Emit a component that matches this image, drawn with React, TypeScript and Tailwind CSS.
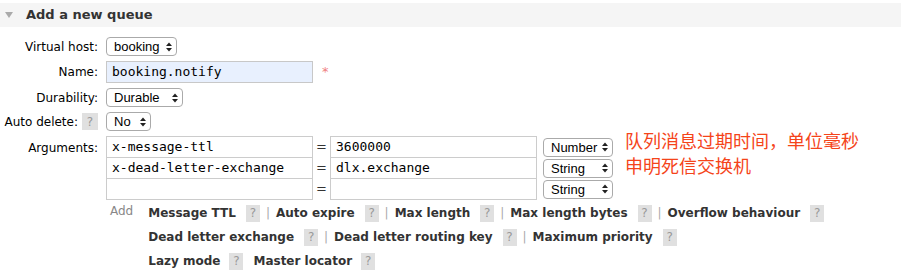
import React from "react";

// Add-queue form from the management console: a collapsible section header,
// a label/control grid, the argument rows and the list of optional keys.

function Help({ className = "" }: { className?: string }) {
  return (
    <span
      className={`inline-flex h-[17px] w-[14px] items-center justify-center bg-[#e0e0e0] text-[12px] text-[#999] ${className}`}
    >
      ?
    </span>
  );
}

function Chevrons() {
  return (
    <svg width="6" height="10" viewBox="0 0 6 10" className="shrink-0">
      <path d="M0 4 L3 0.5 L6 4 Z" fill="#222" />
      <path d="M0 6 L3 9.5 L6 6 Z" fill="#222" />
    </svg>
  );
}

function Select({ label, className }: { label: string; className: string }) {
  return (
    <span
      className={`flex h-[19px] items-center justify-between rounded-[4px] border border-[#aaa] bg-white pl-[7px] pr-[4px] font-['Liberation_Sans',sans-serif] text-[13px] leading-none text-black ${className}`}
    >
      <span>{label}</span>
      <Chevrons />
    </span>
  );
}

function Field({ value, className = "" }: { value: string; className?: string }) {
  return (
    <div
      className={`flex h-[22px] w-[207px] items-center border border-[#ccc] bg-white pl-[5px] font-['DejaVu_Sans_Mono',monospace] text-[13px] text-black ${className}`}
    >
      {value}
    </div>
  );
}

function Row({ label, children }: { label: React.ReactNode; children: React.ReactNode }) {
  return (
    <div className="flex items-start">
      <div className="flex h-[19px] w-[98px] shrink-0 items-center justify-end text-[12px] text-black">{label}</div>
      <div className="ml-[8px]">{children}</div>
    </div>
  );
}

const optional: string[][] = [
  ["Message TTL", "Auto expire", "Max length", "Max length bytes", "Overflow behaviour"],
  ["Dead letter exchange", "Dead letter routing key", "Maximum priority"],
];

export default function App() {
  return (
    <div className="h-[280px] w-[901px] overflow-hidden bg-white pt-[3px] font-['DejaVu_Sans',sans-serif] text-[#333]">
      {/* section header */}
      <div className="flex h-[24px] items-center bg-[#f5f5f5]">
        <svg width="8" height="6" viewBox="0 0 8 6" className="ml-[5px]">
          <path d="M0 0 L8 0 L4 6 Z" fill="#aaa" />
        </svg>
        <span className="ml-[13px] text-[13px] font-bold text-[#333]">Add a new queue</span>
      </div>

      <div className="mt-[10px] flex flex-col gap-[5px]">
        <Row label="Virtual host:">
          <Select label="booking" className="w-[71px]" />
        </Row>

        <div className="flex items-center">
          <div className="w-[98px] text-right text-[12px] text-black">Name:</div>
          <div className="ml-[8px] flex h-[22px] w-[207px] items-center border border-[#c8c8c8] bg-[#e8f0fe] pl-[5px] font-['DejaVu_Sans_Mono',monospace] text-[13px] text-black">
            booking.notify
          </div>
          <span className="ml-[9px] text-[13px] text-[#f08080]">*</span>
        </div>

        <Row label="Durability:">
          <Select label="Durable" className="w-[77px]" />
        </Row>

        <Row
          label={
            <>
              <span>Auto delete:</span>
              <Help className="ml-[4px] w-[16px]" />
            </>
          }
        >
          <Select label="No" className="w-[45px]" />
        </Row>

        {/* arguments */}
        <div className="flex items-start">
          <div className="mt-[3px] w-[98px] text-right text-[12px] text-black">Arguments:</div>
          <div className="ml-[8px] flex flex-col">
            {[
              ["x-message-ttl", "3600000", "Number"],
              ["x-dead-letter-exchange", "dlx.exchange", "String"],
              ["", "", "String"],
            ].map(([k, v, t], i) => (
              <div key={i} className={`flex items-center ${i > 0 ? "-mt-px" : ""}`}>
                <Field value={k} />
                <span className="w-[17px] text-center text-[13px] text-[#333]">=</span>
                <Field value={v} />
                <Select label={t} className="ml-[6px] w-[70px]" />
              </div>
            ))}
          </div>
          <div className="-mt-[8px] ml-[12px] font-['Noto_Sans_CJK_SC',sans-serif] text-[18px] leading-[25px] text-[#f5441a]">
            <div>队列消息过期时间，单位毫秒</div>
            <div>申明死信交换机</div>
          </div>
        </div>

        {/* optional argument keys */}
        <div className="-mt-[4px] ml-[110px] flex text-[12px]">
          <span className="mt-[1px] text-[#888]">Add</span>
          <div className="ml-[15px] flex flex-col">
            {optional.map((line, r) => (
              <div key={r} className="flex h-[24px] items-center">
                {line.map((name, i) => (
                  <span key={name} className="flex items-center">
                    <span className="font-bold text-[#333]">{name}</span>
                    <Help className="ml-[10px]" />
                    {i < line.length - 1 && <span className="mx-[6px] text-[#aaa]">|</span>}
                  </span>
                ))}
              </div>
            ))}
            <div className="flex h-[24px] items-center">
              <span className="font-bold text-[#333]">Lazy mode</span>
              <Help className="ml-[9px]" />
              <span className="ml-[10px] font-bold text-[#333]">Master locator</span>
              <Help className="ml-[9px]" />
            </div>
          </div>
        </div>
      </div>
    </div>
  );
}
